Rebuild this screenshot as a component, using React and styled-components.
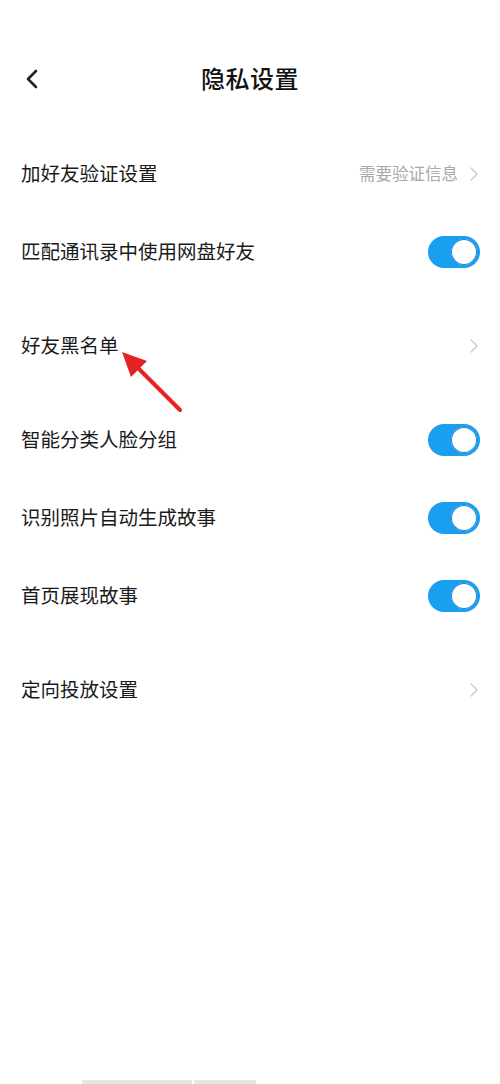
import React from "react";
import styled, { createGlobalStyle } from "styled-components";

const GlobalStyle = createGlobalStyle`
  html, body {
    margin: 0;
    padding: 0;
    background: #ffffff;
  }
  body {
    font-family: "Noto Sans CJK SC", "Noto Sans", sans-serif;
  }
`;

const Page = styled.div`
  width: 500px;
  height: 1084px;
  background: #ffffff;
  position: relative;
  overflow: hidden;
`;

const Header = styled.div`
  height: 78px;
  padding-top: 38px;
  display: flex;
  align-items: center;
  justify-content: center;
  position: relative;
`;

const Back = styled.div`
  position: absolute;
  left: 22px;
  top: 40px;
  height: 78px;
  display: flex;
  align-items: center;
`;

const Title = styled.div`
  font-size: 24px;
  font-weight: 500;
  color: #111111;
  letter-spacing: 0.5px;
`;

const List = styled.div`
  margin-top: 19px;
`;

const Group = styled.div`
  margin-bottom: 16px;
`;

const Row = styled.div`
  height: 78px;
  display: flex;
  align-items: center;
  padding: 0 20px 0 21px;
`;

const Label = styled.div`
  font-size: 19.5px;
  color: #1a1a1a;
  flex: 1;
  margin-top: -3px;
`;

const Value = styled.div`
  font-size: 16.5px;
  color: #a8a8a8;
  margin-right: 10px;
  margin-top: -3px;
`;

const Toggle = styled.div`
  width: 52px;
  height: 32px;
  border-radius: 16px;
  background: #1a9ef0;
  display: flex;
  align-items: center;
  justify-content: flex-end;
  padding-right: 3px;
  box-sizing: border-box;
`;

const Knob = styled.div`
  width: 26px;
  height: 26px;
  border-radius: 50%;
  background: #ffffff;
  box-shadow: inset 0 0 0 1px #1587d4;
`;

const BottomBar = styled.div`
  position: absolute;
  bottom: 0;
  left: 82px;
  display: flex;
  gap: 2px;
`;

const BarPiece = styled.div`
  width: ${(p) => p.w}px;
  height: 4px;
  background: #e6e6e6;
`;

const Arrow = styled.svg`
  position: absolute;
  left: 110px;
  top: 340px;
`;

const Chevron = () => (
  <svg width="12" height="18" viewBox="0 0 12 18">
    <path d="M3 3 L9 9 L3 15" fill="none" stroke="#cfcfcf" strokeWidth="1.6" strokeLinecap="round" strokeLinejoin="round" />
  </svg>
);

const Switch = () => (
  <Toggle>
    <Knob />
  </Toggle>
);

const App = () => {
  return (
    <>
      <GlobalStyle />
      <Page>
        <Header>
          <Back>
            <svg width="20" height="24" viewBox="0 0 20 24">
              <path d="M14 4 L6 12 L14 20" fill="none" stroke="#222" strokeWidth="2.6" strokeLinecap="round" strokeLinejoin="round" />
            </svg>
          </Back>
          <Title>隐私设置</Title>
        </Header>
        <List>
          <Group>
            <Row>
              <Label>加好友验证设置</Label>
              <Value>需要验证信息</Value>
              <Chevron />
            </Row>
            <Row>
              <Label>匹配通讯录中使用网盘好友</Label>
              <Switch />
            </Row>
          </Group>
          <Group>
            <Row>
              <Label>好友黑名单</Label>
              <Chevron />
            </Row>
          </Group>
          <Group>
            <Row>
              <Label>智能分类人脸分组</Label>
              <Switch />
            </Row>
            <Row>
              <Label>识别照片自动生成故事</Label>
              <Switch />
            </Row>
            <Row>
              <Label>首页展现故事</Label>
              <Switch />
            </Row>
          </Group>
          <Group>
            <Row>
              <Label>定向投放设置</Label>
              <Chevron />
            </Row>
          </Group>
        </List>
        <Arrow width="80" height="80" viewBox="0 0 80 80">
          <line x1="70" y1="70" x2="26" y2="26" stroke="#e32222" strokeWidth="4" strokeLinecap="round" />
          <polygon points="12,12 37,21 21,37" fill="#e32222" />
        </Arrow>
        <BottomBar>
          <BarPiece w={110} />
          <BarPiece w={62} />
        </BottomBar>
      </Page>
    </>
  );
};

export default App;
